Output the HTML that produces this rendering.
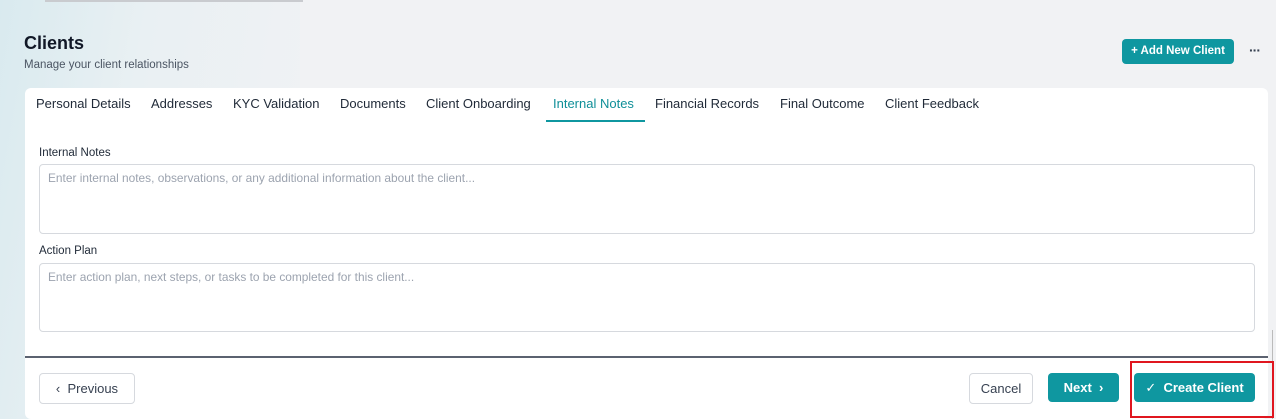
<!DOCTYPE html>
<html><head><style>
*{box-sizing:border-box;margin:0;padding:0}
body{width:1276px;height:419px;overflow:hidden;font-family:"Liberation Sans",sans-serif;background:#f1f2f4;position:relative}
.grad{position:absolute;left:0;top:0;width:300px;height:419px;background:linear-gradient(100deg,#d9eaef 0%,#e9f0f3 40%,rgba(241,242,244,0) 100%)}
.topbar{position:absolute;left:45px;top:0;width:258px;height:2px;background:#c9cbcf}
h1{position:absolute;left:24px;top:33px;font-size:18px;font-weight:bold;color:#111827}
.sub{position:absolute;left:24px;top:59px;font-size:11.5px;color:#4b5563}
.add{position:absolute;left:1122px;top:39px;width:112px;height:25px;background:#0f97a0;border-radius:4px;color:#fff;font-size:11.5px;font-weight:bold;line-height:25px;text-align:center}
.dots{position:absolute;left:1249px;top:42px;font-size:14px;color:#374151;font-weight:bold;letter-spacing:-1px}
.card{position:absolute;left:25px;top:88px;width:1243px;height:331px;background:#fff;border-radius:6px}
.tabs{position:absolute;left:11px;top:8px;font-size:13px;color:#1f2937;white-space:nowrap}
.tabs span{position:absolute;top:0}
.tabs .act{color:#0f8f98}
.ul{position:absolute;left:521px;top:32px;width:99px;height:2px;background:#0f97a0}
label{position:absolute;left:14px;font-size:11.5px;color:#1f2937}
.ta{position:absolute;left:14px;width:1216px;border:1px solid #d6d9de;border-radius:4px;font-size:11.9px;color:#9ca3af;padding:6px 8px}
.div{position:absolute;left:0;top:268px;width:1243px;height:1.5px;background:#5b6270}
.btn{position:absolute;border-radius:4px;font-size:13px;line-height:29px;text-align:center}
.red{position:absolute;left:1130px;top:361px;width:144px;height:57px;border:2.5px solid #e0161f}
.vr{position:absolute;left:1272px;top:330px;width:1px;height:89px;background:#bbb}
</style></head><body>
<div class="grad"></div><div class="topbar"></div>
<h1>Clients</h1>
<div class="sub">Manage your client relationships</div>
<div class="add">+ Add New Client</div>
<div class="dots">···</div>
<div class="card">
 <div class="tabs">
  <span style="left:0">Personal Details</span>
  <span style="left:115px">Addresses</span>
  <span style="left:197px">KYC Validation</span>
  <span style="left:304px">Documents</span>
  <span style="left:390px">Client Onboarding</span>
  <span style="left:517px" class="act">Internal Notes</span>
  <span style="left:619px">Financial Records</span>
  <span style="left:744px">Final Outcome</span>
  <span style="left:849px">Client Feedback</span>
 </div>
 <div class="ul"></div>
 <label style="top:59px">Internal Notes</label>
 <div class="ta" style="top:76px;height:70px">Enter internal notes, observations, or any additional information about the client...</div>
 <label style="top:157px">Action Plan</label>
 <div class="ta" style="top:175px;height:69px">Enter action plan, next steps, or tasks to be completed for this client...</div>
 <div class="div"></div>
 <div class="btn" style="left:14px;top:285px;width:96px;border:1px solid #d6d9de;color:#374151">&lsaquo;&nbsp; Previous</div>
 <div class="btn" style="left:944px;top:285px;width:64px;border:1px solid #d6d9de;color:#374151">Cancel</div>
 <div class="btn" style="left:1023px;top:285px;width:71px;background:#0f97a0;color:#fff;font-weight:bold">Next &nbsp;&rsaquo;</div>
 <div class="btn" style="left:1109px;top:285px;width:121px;background:#0f97a0;color:#fff;font-weight:bold"><span style="font-weight:normal">✓</span>&nbsp; Create Client</div>
</div>
<div class="vr"></div>
<div class="red"></div>
</body></html>
